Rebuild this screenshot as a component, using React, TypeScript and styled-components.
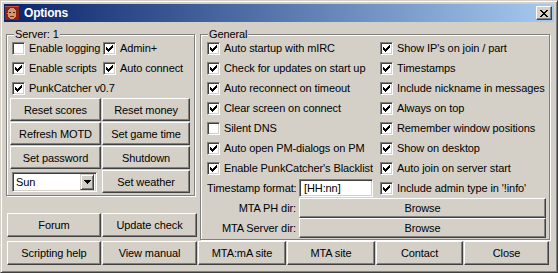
import React from "react";
import styled, { createGlobalStyle } from "styled-components";

const FACE = "#D4D0C8";
const SHADOW = "#808080";
const DARK = "#404040";

const GlobalStyle = createGlobalStyle`
  * { box-sizing: border-box; }
  html, body {
    margin: 0;
    padding: 0;
    background: ${FACE};
  }
  body {
    font-family: "Liberation Sans", Arial, sans-serif;
    font-size: 11px;
    letter-spacing: -0.1px;
    color: #000;
  }
`;

const Window = styled.div`
  width: 558px;
  height: 273px;
  display: flex;
  flex-direction: column;
  padding: 3px;
  background: ${FACE};
  border: 1px solid;
  border-color: ${FACE} ${DARK} ${DARK} ${FACE};
  box-shadow: inset 1px 1px #fff, inset -1px -1px ${SHADOW};
  overflow: hidden;
`;

const TitleBar = styled.div`
  height: 18px;
  display: flex;
  align-items: center;
  padding: 0 2px 0 1px;
  background: linear-gradient(to right, #0a246a, #a6caf0);
`;

const TitleText = styled.span`
  margin-left: 5px;
  color: #fff;
  font-size: 12px;
  font-weight: bold;
  letter-spacing: -0.2px;
`;

const CloseButton = styled.div`
  width: 16px;
  height: 14px;
  margin-left: auto;
  display: flex;
  align-items: center;
  justify-content: center;
  background: ${FACE};
  border: 1px solid;
  border-color: #fff ${DARK} ${DARK} #fff;
  box-shadow: inset -1px -1px ${SHADOW};
`;

const Client = styled.div`
  flex: 1;
  display: flex;
  flex-direction: column;
  padding: 12px 0 0 2px;
`;

const TopArea = styled.div`
  display: grid;
  grid-template-columns: 189px 350px;
  column-gap: 5px;
`;

const LeftCol = styled.div`
  display: flex;
  flex-direction: column;
  justify-content: space-between;
`;

const Group = styled.div<{ $pad: string }>`
  position: relative;
  padding: ${(p) => p.$pad};
  border: 1px solid ${SHADOW};
  box-shadow: inset 1px 1px #fff, 1px 1px #fff;
`;

const GroupLabel = styled.span`
  position: absolute;
  top: -7px;
  left: 7px;
  padding: 0 1px;
  line-height: 13px;
  background: ${FACE};
`;

const CheckGrid = styled.div<{ $first: number }>`
  display: grid;
  grid-template-columns: ${(p) => p.$first}px 1fr;
  grid-auto-rows: 20px;
`;

const ServerChecks = styled(CheckGrid)`
  padding-left: 4px;
`;

const CheckRow = styled.label`
  display: flex;
  align-items: center;
  gap: 4px;
  white-space: nowrap;
`;

const Box = styled.span`
  width: 13px;
  height: 13px;
  flex: none;
  display: flex;
  align-items: center;
  justify-content: center;
  background: #fff;
  border: 1px solid;
  border-color: ${SHADOW} #fff #fff ${SHADOW};
  box-shadow: inset 1px 1px ${DARK}, inset -1px -1px ${FACE};
`;

const ButtonGrid = styled.div<{ $cols: string; $rows?: number }>`
  display: grid;
  grid-template-columns: ${(p) => p.$cols};
  grid-auto-rows: ${(p) => p.$rows ?? 23}px;
  gap: 1px;
`;

const ServerButtons = styled(ButtonGrid)`
  margin-left: 2px;
`;

const ForumRow = styled(ButtonGrid)`
  margin: 0 0 3px 1px;
`;

const BottomRow = styled(ButtonGrid)`
  margin: 1px 0 0 1px;
`;

const Button = styled.button`
  padding: 0;
  font: inherit;
  letter-spacing: inherit;
  color: #000;
  background: ${FACE};
  border: 1px solid;
  border-color: #fff ${DARK} ${DARK} #fff;
  box-shadow: inset -1px -1px ${SHADOW};
`;

const Sunken = styled.div`
  background: #fff;
  border: 1px solid;
  border-color: ${SHADOW} #fff #fff ${SHADOW};
  box-shadow: inset 1px 1px ${DARK}, inset -1px -1px ${FACE};
`;

const Combo = styled(Sunken)`
  width: 85px;
  height: 20px;
  margin-left: 2px;
  align-self: center;
  display: flex;
  align-items: center;
  padding: 2px 2px 2px 3px;
`;

const ComboText = styled.span`
  flex: 1;
`;

const ComboButton = styled.span`
  width: 14px;
  height: 16px;
  display: flex;
  align-items: center;
  justify-content: center;
  background: ${FACE};
  border: 1px solid;
  border-color: ${FACE} ${DARK} ${DARK} ${FACE};
  box-shadow: inset 1px 1px #fff, inset -1px -1px ${SHADOW};
`;

const FieldRow = styled.div<{ $wide?: boolean }>`
  display: grid;
  grid-template-columns: 89px ${(p) => (p.$wide ? "1fr" : "74px")};
  grid-column: ${(p) => (p.$wide ? "1 / -1" : "auto")};
  column-gap: 3px;
  align-items: center;
`;

const FieldLabel = styled.span`
  text-align: right;
  white-space: nowrap;
`;

const TextBox = styled(Sunken)`
  height: 18px;
  display: flex;
  align-items: center;
  padding-left: 4px;
`;

const BrowseButton = styled(Button)`
  height: 20px;
`;

const CheckMark = () => (
  <svg width="7" height="7" viewBox="0 0 7 7" shapeRendering="crispEdges">
    <path
      d="M0 2h1v3h-1z M1 3h1v3h-1z M2 4h1v3h-1z M3 3h1v3h-1z M4 2h1v3h-1z M5 1h1v3h-1z M6 0h1v3h-1z"
      fill="#000"
    />
  </svg>
);

const Check = ({ label, checked = true }: { label: string; checked?: boolean }) => (
  <CheckRow>
    <Box>{checked && <CheckMark />}</Box>
    <span>{label}</span>
  </CheckRow>
);

const AppIcon = () => (
  <svg width="14" height="14" viewBox="0 0 14 14" shapeRendering="crispEdges">
    <rect x="0" y="0" width="14" height="14" fill="#8c2414" />
    <rect x="0" y="0" width="14" height="1" fill="#c0504a" />
    <ellipse cx="7" cy="7.5" rx="4.5" ry="5.5" fill="#d9956a" />
    <rect x="4" y="6" width="2" height="1" fill="#3a1a10" />
    <rect x="8" y="6" width="2" height="1" fill="#3a1a10" />
    <rect x="5" y="10" width="4" height="1" fill="#7a3020" />
  </svg>
);

const CloseGlyph = () => (
  <svg width="8" height="7" viewBox="0 0 8 7" shapeRendering="crispEdges">
    <path
      d="M0 0h2v1h-2z M6 0h2v1h-2z M1 1h2v1h-2z M5 1h2v1h-2z M2 2h4v1h-4z M3 3h2v1h-2z M2 4h4v1h-4z M1 5h2v1h-2z M5 5h2v1h-2z M0 6h2v1h-2z M6 6h2v1h-2z"
      fill="#000"
    />
  </svg>
);

const DownArrow = () => (
  <svg width="7" height="4" viewBox="0 0 7 4" shapeRendering="crispEdges">
    <path d="M0 0h7v1h-7z M1 1h5v1h-5z M2 2h3v1h-3z M3 3h1v1h-1z" fill="#000" />
  </svg>
);

const leftChecks = [
  "Auto startup with mIRC",
  "Check for updates on start up",
  "Auto reconnect on timeout",
  "Clear screen on connect",
  "Silent DNS",
  "Auto open PM-dialogs on PM",
  "Enable PunkCatcher's Blacklist",
];

const rightChecks = [
  "Show IP's on join / part",
  "Timestamps",
  "Include nickname in messages",
  "Always on top",
  "Remember window positions",
  "Show on desktop",
  "Auto join on server start",
];

export default function App() {
  return (
    <>
      <GlobalStyle />
      <Window>
        <TitleBar>
          <AppIcon />
          <TitleText>Options</TitleText>
          <CloseButton>
            <CloseGlyph />
          </CloseButton>
        </TitleBar>

        <Client>
          <TopArea>
            <LeftCol>
              <Group $pad="3px 2px 2px 1px">
                <GroupLabel>Server: 1</GroupLabel>
                <ServerChecks $first={91}>
                  <Check label="Enable logging" checked={false} />
                  <Check label="Admin+" />
                  <Check label="Enable scripts" />
                  <Check label="Auto connect" />
                  <Check label="PunkCatcher v0.7" />
                </ServerChecks>
                <ServerButtons $cols="91px 88px">
                  <Button>Reset scores</Button>
                  <Button>Reset money</Button>
                  <Button>Refresh MOTD</Button>
                  <Button>Set game time</Button>
                  <Button>Set password</Button>
                  <Button>Shutdown</Button>
                  <Combo>
                    <ComboText>Sun</ComboText>
                    <ComboButton>
                      <DownArrow />
                    </ComboButton>
                  </Combo>
                  <Button>Set weather</Button>
                </ServerButtons>
              </Group>

              <ForumRow $cols="94px 95px" $rows={24}>
                <Button>Forum</Button>
                <Button>Update check</Button>
              </ForumRow>
            </LeftCol>

            <Group $pad="3px 3px 1px 6px">
              <GroupLabel>General</GroupLabel>
              <CheckGrid $first={173}>
                {leftChecks.map((label, i) => (
                  <React.Fragment key={label}>
                    <Check label={label} checked={label !== "Silent DNS"} />
                    <Check label={rightChecks[i]} />
                  </React.Fragment>
                ))}
                <FieldRow>
                  <FieldLabel>Timestamp format:</FieldLabel>
                  <TextBox>[HH:nn]</TextBox>
                </FieldRow>
                <Check label="Include admin type in '!info'" />
                <FieldRow $wide>
                  <FieldLabel>MTA PH dir:</FieldLabel>
                  <BrowseButton>Browse</BrowseButton>
                </FieldRow>
                <FieldRow $wide>
                  <FieldLabel>MTA Server dir:</FieldLabel>
                  <BrowseButton>Browse</BrowseButton>
                </FieldRow>
              </CheckGrid>
            </Group>
          </TopArea>

          <BottomRow $cols="94px 95px 88px 88px 87px 85px" $rows={24}>
            <Button>Scripting help</Button>
            <Button>View manual</Button>
            <Button>MTA:mA site</Button>
            <Button>MTA site</Button>
            <Button>Contact</Button>
            <Button>Close</Button>
          </BottomRow>
        </Client>
      </Window>
    </>
  );
}
